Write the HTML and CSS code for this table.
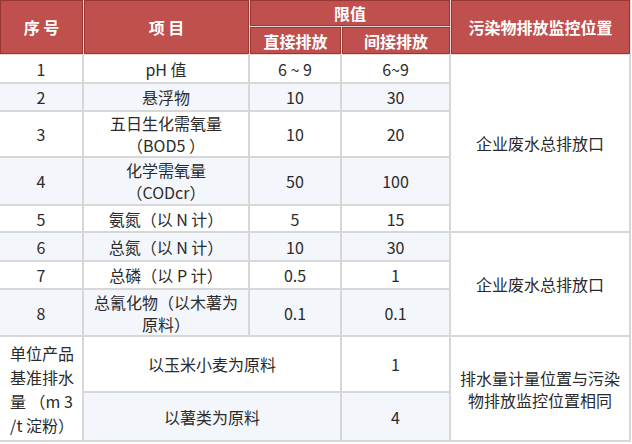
FILE: index.html
```html
<!DOCTYPE html>
<html lang="zh">
<head>
<meta charset="utf-8">
<link rel="stylesheet" href="styles.css">
</head>
<body>
<table class="std">
  <colgroup>
    <col class="c1"><col class="c2"><col class="c3"><col class="c4"><col class="c5">
  </colgroup>
  <thead>
    <tr class="h1">
      <th rowspan="2">序 号</th>
      <th rowspan="2">项 目</th>
      <th colspan="2">限值</th>
      <th rowspan="2">污染物排放监控位置</th>
    </tr>
    <tr class="h2">
      <th>直接排放</th>
      <th>间接排放</th>
    </tr>
  </thead>
  <tbody>
    <tr class="r1"><td>1</td><td>pH 值</td><td>6 ~ 9</td><td>6~9</td><td rowspan="5" class="loc">企业废水总排放口</td></tr>
    <tr class="r2 alt"><td>2</td><td>悬浮物</td><td>10</td><td>30</td></tr>
    <tr class="r3"><td>3</td><td>五日生化需氧量<br>（BOD5 ）</td><td>10</td><td>20</td></tr>
    <tr class="r4 alt"><td>4</td><td>化学需氧量<br>（CODcr）</td><td>50</td><td>100</td></tr>
    <tr class="r5"><td>5</td><td>氨氮（以 N 计）</td><td>5</td><td>15</td></tr>
    <tr class="r6 alt"><td>6</td><td>总氮（以 N 计）</td><td>10</td><td>30</td><td rowspan="3" class="loc">企业废水总排放口</td></tr>
    <tr class="r7"><td>7</td><td>总磷（以 P 计）</td><td>0.5</td><td>1</td></tr>
    <tr class="r8 alt"><td>8</td><td>总氰化物（以木薯为<br>原料）</td><td>0.1</td><td>0.1</td></tr>
    <tr class="r9"><td rowspan="2" class="unit">单位产品<br>基准排水<br>量 （m 3<br>/t 淀粉）</td><td colspan="2">以玉米小麦为原料</td><td>1</td><td rowspan="2" class="loc">排水量计量位置与污染<br>物排放监控位置相同</td></tr>
    <tr class="r10 alt"><td colspan="2" class="pad">以薯类为原料</td><td class="pad">4</td></tr>
  </tbody>
</table>
</body>
</html>
```

FILE: styles.css
```css
html, body {
  margin: 0;
  padding: 0;
  background: #ffffff;
}

.std {
  width: 631px;
  table-layout: fixed;
  border-collapse: separate;
  border-spacing: 0;
  font-family: "Noto Sans CJK SC", "Microsoft YaHei", sans-serif;
  font-size: 16px;
  line-height: 22px;
  color: #2b2b2b;
  text-align: center;
}

.c1 { width: 84px; }
.c2 { width: 166px; }
.c3 { width: 92px; }
.c4 { width: 109px; }
.c5 { width: 180px; }

.std th {
  background: #c0504d;
  color: #ffffff;
  font-weight: bold;
  padding: 0 4px;
  border-right: 1px solid #eadada;
  border-bottom: 1px solid #eadada;
  box-shadow: inset 0 0 0 1px #983634;
  vertical-align: middle;
}

.std td {
  padding: 0 6px;
  border-right: 2px solid #d7d7d7;
  border-bottom: 2px solid #d7d7d7;
  background: #ffffff;
  vertical-align: middle;
}

.std tr.alt td {
  background: #f3f6fb;
}

.std td.loc {
  background: #ffffff;
  padding: 0 8px;
}

.std tr.alt td.loc { background: #ffffff; }

.std td.unit {
  background: #ffffff;
  line-height: 24px;
  text-align: left;
  padding: 0 4px 0 10px;
}

.h1 { height: 27px; }
.h2 { height: 28px; }
.r1 { height: 29px; }
.r2 { height: 28px; }
.r3 { height: 46px; }
.r4 { height: 48px; }
.r5 { height: 27px; }
.r6 { height: 29px; }
.r7 { height: 28px; }
.r8 { height: 47px; }
.r9 { height: 56px; }
.r10 { height: 49px; }
```
